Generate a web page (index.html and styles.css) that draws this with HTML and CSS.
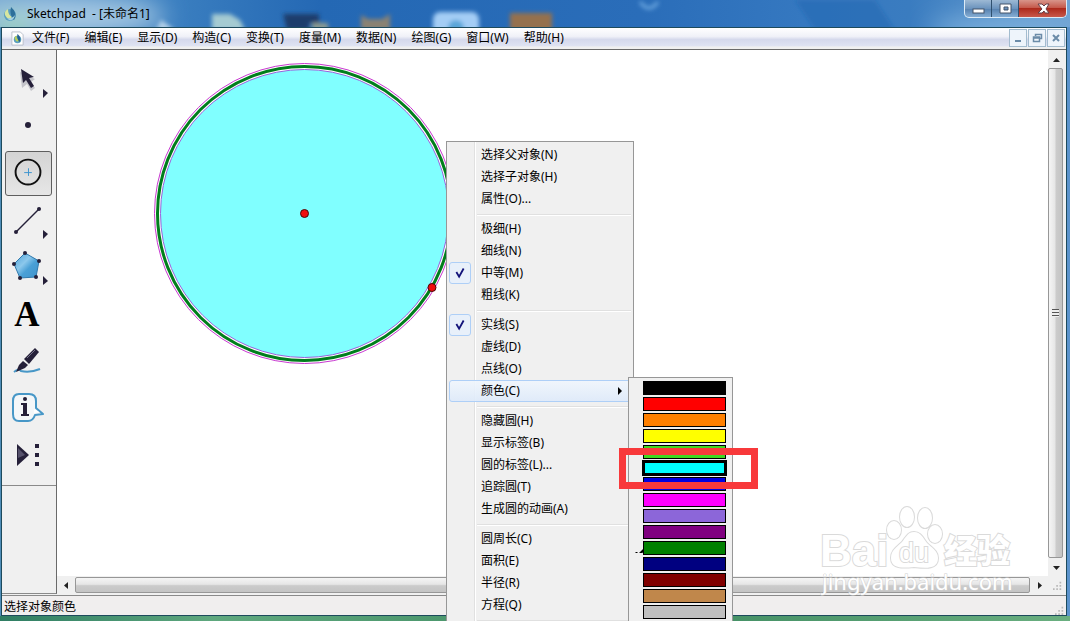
FILE: index.html
```html
<!DOCTYPE html>
<html lang="zh-CN">
<head>
  <meta charset="UTF-8" />
  <meta name="viewport" content="width=device-width, initial-scale=1.0"/>
  <title>Sketchpad - [未命名1]</title>
  <link rel="stylesheet" href="styles.css">
</head>
<body>
  <!-- Title bar -->
  <header class="titlebar">
    <svg class="title-bg" viewBox="0 0 1070 27" preserveAspectRatio="none" aria-hidden="true">
      <defs>
        <filter id="soft"><feGaussianBlur stdDeviation="2"/></filter>
        <filter id="glow" x="-50%" y="-100%" width="200%" height="300%"><feGaussianBlur stdDeviation="12"/></filter>
      </defs>
      <g filter="url(#glow)">
        <ellipse cx="70" cy="16" rx="95" ry="18" fill="#a9cbe4"/>
        <ellipse cx="14" cy="28" rx="20" ry="12" fill="#9fd6b8"/>
        <ellipse cx="1000" cy="30" rx="70" ry="12" fill="#7fb2de"/>
      </g>
      <g filter="url(#soft)">
        <path d="M156 30l5-10 14 10z" fill="#b3d0e8"/>
        <path d="M212 30V14h18l10 6 5 10z" fill="#a5cbd2"/>
        <path d="M283 14h36v9h-10v7h-22z" fill="#1c3c6c"/>
        <path d="M312 23h16v7h-16z" fill="#8f9c90"/>
        <path d="M361 30V15l7 4h14l8-5v16z" fill="#8a8272"/>
        <rect x="433" y="12" width="46" height="24" rx="7" fill="#a4cdf5"/>
        <circle cx="456" cy="28" r="8" fill="#5aa5d8"/>
        <rect x="510" y="13" width="42" height="20" fill="#95714e"/>
        <path d="M640 2q9 12 18 0" fill="none" stroke="#6aa6df" stroke-width="3"/>
        <path d="M795 0h80l20 30h-80z" fill="#1f62ac" opacity=".4"/>
      </g>
    </svg>
    <svg class="app-icon" viewBox="0 0 16 16" aria-hidden="true">
      <circle cx="7" cy="9" r="6" fill="#5c9fc0"/>
      <path d="M2 9q-1-4 3-6 0 6 4 8-4 4-7-2z" fill="#d7e6a0"/>
      <path d="M8 1q7 6 3 13-5-5-3-13z" fill="#2d6f9a"/>
      <path d="M4 12q5 1 8-3-1 6-6 5z" fill="#a8d3e2"/>
    </svg>
    <h1>Sketchpad&nbsp; - [未命名1]</h1>
    <div class="window-buttons">
      <button aria-label="最小化"><svg viewBox="0 0 16 16"><rect x="3" y="8" width="11" height="4" fill="#fff" stroke="#45546b"/></svg></button>
      <button aria-label="最大化"><svg viewBox="0 0 16 16"><path d="M3 3h11v9H3zM7 6v3h4V6z" fill="#fff" fill-rule="evenodd" stroke="#45546b"/></svg></button>
      <button class="close" aria-label="关闭"><svg viewBox="0 0 16 16"><path d="M3 3h4l2 2 2-2h3l-3 5 3 4h-4l-1-2-2 2H3l4-4z" fill="#fff" stroke="#664048"/></svg></button>
    </div>
  </header>

  <div class="window">
    <!-- Menu bar -->
    <nav class="menubar">
      <svg class="doc-icon" viewBox="0 0 16 16" aria-hidden="true">
        <path d="M2 1h9l3 3v11H2z" fill="#fff" stroke="#b9bec9"/>
        <circle cx="8" cy="9" r="4" fill="#5c9fc0"/>
        <path d="M5 8q0-3 2-3 0 4 3 5-3 3-5-2z" fill="#b9cf58"/>
        <path d="M8 3q5 5 2 9-3-4-2-9z" fill="#235f8e"/>
      </svg>
      <div class="menus">
        <button>文件(F)</button>
        <button>编辑(E)</button>
        <button>显示(D)</button>
        <button>构造(C)</button>
        <button>变换(T)</button>
        <button>度量(M)</button>
        <button>数据(N)</button>
        <button>绘图(G)</button>
        <button>窗口(W)</button>
        <button>帮助(H)</button>
      </div>
      <div class="doc-buttons">
        <button aria-label="最小化文档"><svg viewBox="0 0 16 16"><path d="M5 11h6" stroke="#6b8ba8" stroke-width="2"/></svg></button>
        <button aria-label="还原文档"><svg viewBox="0 0 16 16"><path d="M6.500 6V4.500h6v4H11M4 8h6M4.500 7v4.500h6V7z" fill="none" stroke="#6b8ba8" stroke-width="1.500"/></svg></button>
        <button aria-label="关闭文档"><svg viewBox="0 0 16 16"><path d="M5 5l6 6M11 5l-6 6" stroke="#6b8ba8" stroke-width="2"/></svg></button>
      </div>
    </nav>

    <main class="workspace">
      <!-- Toolbox -->
      <aside class="toolbox">
        <button aria-label="移动箭头工具"><svg viewBox="0 0 47 45">
          <path d="M15 15l2 16 5-4 4 7 4-3-4-6 4-3z" fill="#c4c4ca"/>
          <path d="M16 12l2 14 3-3 5 8 3-2-5-8 5-1z" fill="#252039"/>
          <path d="M38 32l5 4-5 5z" fill="#252039"/></svg></button>
        <button aria-label="点工具"><svg viewBox="0 0 47 45"><circle cx="23" cy="21" r="3" fill="#252039"/></svg></button>
        <button class="active" aria-label="圆工具"><svg viewBox="0 0 47 45">
          <circle cx="23" cy="21" r="13" fill="none" stroke="#111" stroke-width="2"/>
          <path d="M19 21.500h8M23.500 17v8" stroke="#3c93cf"/></svg></button>
        <button aria-label="线段直尺工具"><svg viewBox="0 0 47 45">
          <path d="M11 34l24-24" stroke="#252039" stroke-width="1.500"/>
          <circle cx="11" cy="34" r="2" fill="#252039"/><circle cx="34" cy="11" r="2" fill="#252039"/>
          <path d="M38 32l5 4-5 5z" fill="#252039"/></svg></button>
        <button aria-label="多边形工具"><svg viewBox="0 0 47 45">
          <defs><linearGradient id="poly" x2="1" y2="1"><stop offset="0" stop-color="#4a9fd6"/><stop offset=".4" stop-color="#8cc8ec"/><stop offset=".6" stop-color="#4aa0d6"/><stop offset="1" stop-color="#3f93cc"/></linearGradient></defs>
          <path d="M20 8l14 8-3 16-16 1-6-14z" fill="url(#poly)" stroke="#2e78ac"/>
          <g fill="#252039"><circle cx="20" cy="8" r="2"/><circle cx="34" cy="16" r="2"/><circle cx="31" cy="32" r="2"/><circle cx="15" cy="33" r="2"/><circle cx="9" cy="19" r="2"/></g>
          <path d="M38 31l5 5-5 4z" fill="#252039"/></svg></button>
        <button class="letter" aria-label="文本工具">A</button>
        <button aria-label="标记工具"><svg viewBox="0 0 47 45">
          <path d="M9 33q5-4 7-1 9 2 19-2" fill="none" stroke="#4797c7" stroke-width="2"/>
          <path d="M19 20L30 9l4 4-10 12z" fill="#252039"/><path d="M18 22l5 4-3 3-9 4 3-7z" fill="#252039"/>
          <path d="M22 19l8-8" stroke="#77738a"/></svg></button>
        <button aria-label="信息工具"><svg viewBox="0 0 47 45">
          <path d="M14 8h10q7 0 7 7v7l7 6-8 1q-2 6-7 6h-9q-6 0-6-7V15q0-7 6-7z" fill="#f4f7f9" stroke="#4797c7" stroke-width="2" stroke-linejoin="round"/>
          <path d="M29 23l5 3-5 1z" fill="#fff"/>
          <circle cx="20" cy="13" r="2" fill="#252039"/><path d="M16 17h6v11h2v2h-8v-2h2v-9h-2z" fill="#252039"/></svg></button>
        <button aria-label="自定义工具"><svg viewBox="0 0 47 45">
          <path d="M12 11l12 11-12 11z" fill="#252039"/><path d="M13 15l7 7-7 3z" fill="#55516b"/>
          <path d="M30 11h4v4h-4zM30 20h4v4h-4zM30 29h4v4h-4z" fill="#252039"/></svg></button>
      </aside>

      <!-- Drawing area -->
      <section class="canvas">
        <svg class="drawing" width="400" height="320" viewBox="57 50 400 320">
          <circle cx="304.500" cy="213.500" r="147" fill="#80ffff" stroke="#fff" stroke-width="6"/>
          <circle cx="304.500" cy="213.500" r="150" fill="none" stroke="#c838d0"/>
          <circle cx="304.500" cy="213.500" r="144" fill="none" stroke="#9a62dc"/>
          <circle cx="304.500" cy="213.500" r="147" fill="none" stroke="#007e1c" stroke-width="3"/>
          <circle cx="304.500" cy="213.500" r="4" fill="#f00d0d" stroke="#4b0808"/>
          <circle cx="432" cy="287.500" r="4" fill="#f00d0d" stroke="#4b0808"/>
        </svg>
      </section>

      <div class="scrollbar vertical">
        <button aria-label="向上滚动"><svg viewBox="0 0 9 9"><path d="M1 7h7L4.500 3z"/></svg></button>
        <div class="thumb"><span class="grip"></span></div>
        <button aria-label="向下滚动"><svg viewBox="0 0 9 9"><path d="M1 3h7L4.500 7z"/></svg></button>
      </div>
      <div class="scrollbar horizontal">
        <button aria-label="向左滚动"><svg viewBox="0 0 9 9"><path d="M6 1v7L2 4.500z"/></svg></button>
        <div class="thumb"></div>
        <button aria-label="向右滚动"><svg viewBox="0 0 9 9"><path d="M3 1v7l4-3.500z"/></svg></button>
      </div>
      <div class="corner"><svg class="size-grip" viewBox="0 0 11 11"><path d="M8 1h2v2H8zM4 5h2v2H4zM8 5h2v2H8zM0 9h2v2H0zM4 9h2v2H4zM8 9h2v2H8z"/></svg></div>
    </main>

    <footer class="statusbar">
      <span>选择对象颜色</span>
      <svg class="size-grip" viewBox="0 0 11 11"><path d="M8 1h2v2H8zM4 5h2v2H4zM8 5h2v2H8zM0 9h2v2H0zM4 9h2v2H4zM8 9h2v2H8z"/></svg>
    </footer>
  </div>

  <svg class="watermark" width="200" height="100" viewBox="815 500 200 100">
    <g class="logo">
      <text x="820" y="566" font-size="44">Bai</text>
      <text x="944" y="563" font-size="33" class="cjk">经验</text>
      <ellipse cx="894" cy="530" rx="7" ry="9"/>
      <ellipse cx="907" cy="517" rx="7" ry="10"/>
      <ellipse cx="925" cy="518" rx="7" ry="10"/>
      <ellipse cx="935" cy="534" rx="7" ry="9"/>
      <path d="M914 532c7 0 9 6 13 11 5 5 11 8 11 15 0 12-13 10-24 9-11 1-23 2-23-9 0-8 6-11 11-16 4-5 6-10 12-10z"/>
      <text x="899" y="562" font-size="27" class="du">du</text>
    </g>
    <text x="822" y="590" class="site">jingyan.baidu.com</text>
  </svg>

  <!-- Right-click menu -->
  <div class="context-menu" role="menu">
    <button role="menuitem">选择父对象(N)</button>
    <button role="menuitem">选择子对象(H)</button>
    <button role="menuitem">属性(O)...</button>
    <hr>
    <button role="menuitem">极细(H)</button>
    <button role="menuitem">细线(N)</button>
    <button role="menuitem" class="checked">中等(M)<svg viewBox="0 0 22 22"><path d="M7 10l3 5 5-9" /></svg></button>
    <button role="menuitem">粗线(K)</button>
    <hr>
    <button role="menuitem" class="checked">实线(S)<svg viewBox="0 0 22 22"><path d="M7 10l3 5 5-9" /></svg></button>
    <button role="menuitem">虚线(D)</button>
    <button role="menuitem">点线(O)</button>
    <button role="menuitem" class="open">颜色(C)</button>
    <hr>
    <button role="menuitem">隐藏圆(H)</button>
    <button role="menuitem">显示标签(B)</button>
    <button role="menuitem">圆的标签(L)...</button>
    <button role="menuitem">追踪圆(T)</button>
    <button role="menuitem">生成圆的动画(A)</button>
    <hr>
    <button role="menuitem">圆周长(C)</button>
    <button role="menuitem">面积(E)</button>
    <button role="menuitem">半径(R)</button>
    <button role="menuitem">方程(Q)</button>
    <hr>
  </div>

  <!-- Colour submenu -->
  <div class="color-menu" role="menu">
    <button class="black" aria-label="黑"></button>
    <button class="red" aria-label="红"></button>
    <button class="orange" aria-label="橙"></button>
    <button class="yellow" aria-label="黄"></button>
    <button class="lime" aria-label="浅绿"></button>
    <button class="cyan selected" aria-label="青"></button>
    <button class="blue" aria-label="蓝"></button>
    <button class="magenta" aria-label="品红"></button>
    <button class="violet" aria-label="淡紫"></button>
    <button class="purple" aria-label="紫"></button>
    <button class="green current" aria-label="绿"><svg viewBox="0 0 9 6"><path d="M0 4h2l1 1H1zM4 5l5-5v4L7 5z"/></svg></button>
    <button class="navy" aria-label="深蓝"></button>
    <button class="maroon" aria-label="深红"></button>
    <button class="brown" aria-label="棕"></button>
    <button class="silver" aria-label="灰"></button>
  </div>
  <div class="highlight"></div>
</body>
</html>
```
FILE: styles.css
```css
* {
  box-sizing: border-box;
}

body {
  margin: 0;
  height: 100vh;
  position: relative;
  display: flex;
  flex-direction: column;
  overflow: hidden;
  font-family: "Noto Sans", "Noto Sans CJK SC", sans-serif;
  font-size: 12px;
  line-height: 16px;
  color: #000;
  background: linear-gradient(90deg, #2f7d63, #5fa87e 20%, #3d8a60 60%, #6aaf80);
}

button {
  margin: 0;
  padding: 0;
  border: none;
  background: none;
  font: inherit;
  color: inherit;
}

svg {
  display: block;
}

/* Title bar */
.titlebar {
  position: relative;
  flex: none;
  display: flex;
  align-items: center;
  height: 27px;
  padding-left: 3px;
  background: linear-gradient(90deg, #6fa3cf, #3b7fc0 16%, #2468b4 30%, #2a6db9 60%, #3578c0 75%, #3a7cc0 85%, #6fa3d3);
}

.title-bg {
  position: absolute;
  inset: 0;
  width: 100%;
  height: 100%;
}

.app-icon {
  position: relative;
  width: 16px;
  height: 16px;
}

.titlebar h1 {
  position: relative;
  margin: 0 0 0 8px;
  font-size: 12px;
  font-weight: normal;
}

.window-buttons {
  position: relative;
  align-self: flex-start;
  display: flex;
  height: 18px;
  margin-left: auto;
  margin-right: 3px;
  border: 1px solid #dcebf7;
  border-top: none;
  border-radius: 0 0 5px 5px;
  overflow: hidden;
  background: linear-gradient(#9db9d4, #6b93bd 50%, #5580ae 51%, #85add4);
}

.window-buttons button {
  width: 27px;
  border-right: 1px solid #2f506f;
}

.window-buttons .close {
  width: 47px;
  border-right: none;
  background: linear-gradient(#d8958a, #c55a4c 45%, #ad2a1c 50%, #c8584a);
}

.window-buttons svg {
  width: 16px;
  height: 16px;
  margin: 0 auto;
}

/* Window body */
.window {
  flex: 1;
  min-height: 0;
  display: flex;
  flex-direction: column;
  margin: 0 3px 5px 1px;
  border: 1px solid #1d4a5c;
  background: #f0f0f0;
  box-shadow: 4px 0 0 #5b93cc, -1px 0 0 #4f8db8;
}

.menubar {
  flex: none;
  display: flex;
  align-items: center;
  height: 22px;
  padding: 0 1px 1px 8px;
  border-bottom: 1px solid #6a6a6a;
  background: linear-gradient(#fff, #f0f1f8 40%, #d5d9ec 55%, #dfe3f2 85%, #f0f0f0 90%);
}

.doc-icon {
  width: 15px;
  height: 15px;
}

.menus {
  display: flex;
  gap: 15px;
  margin-left: 7px;
}

.doc-buttons {
  display: flex;
  gap: 1px;
  margin-left: auto;
}

.doc-buttons button {
  width: 18px;
  height: 18px;
  border: 1px solid #a3bccf;
  background: #eef4fb;
}

.workspace {
  flex: 1;
  min-height: 0;
  display: grid;
  grid-template-columns: 55px 1fr 18px;
  grid-template-rows: 1fr 18px;
}

/* Toolbox */
.toolbox {
  grid-row: 1 / 3;
  display: flex;
  flex-direction: column;
  gap: 2px;
  padding: 7px 4px 0 3px;
  border-right: 1px solid #6a6a6a;
  border-bottom: 1px solid #8a8a8a;
}

.toolbox button {
  flex: none;
  width: 47px;
  height: 45px;
}

.toolbox .active {
  border: 1px solid #5e5e5e;
  border-radius: 3px;
  background: linear-gradient(#d4d4d4, #e6e6e6);
}

.toolbox .letter {
  font: bold 35px/45px "Liberation Serif", serif;
  padding-right: 3px;
}

.toolbox::after {
  content: "";
  height: 1px;
  margin: 5px -4px 0 -3px;
  background: #8a8a8a;
}

.canvas {
  min-width: 0;
  min-height: 0;
  overflow: hidden;
  background: #fff;
}

/* Scrollbars */
.scrollbar {
  display: flex;
  background: #f0f0f0;
}

.scrollbar button {
  flex: none;
  display: grid;
  place-items: center;
  width: 18px;
  height: 18px;
}

.scrollbar button svg {
  width: 9px;
  height: 9px;
  fill: #222;
}

.scrollbar .thumb {
  flex: 1;
  display: grid;
  place-items: center;
  border: 1px solid #979797;
  border-radius: 2px;
}

.vertical {
  flex-direction: column;
  padding-right: 2px;
}

.vertical button {
  width: 16px;
}

.vertical .thumb {
  width: 15px;
  background: linear-gradient(90deg, #f5f5f5, #e6e6e6 45%, #cbcbcb 55%, #c4c4c4);
}

.vertical .grip {
  width: 7px;
  height: 8px;
  background: repeating-linear-gradient(#555 0 1px, #eee 1px 3px);
}

.horizontal {
  padding: 1px 0;
}

.horizontal button {
  height: 16px;
}

.horizontal .thumb {
  background: linear-gradient(#f5f5f5, #e6e6e6 45%, #cbcbcb 55%, #c4c4c4);
}

.corner {
  display: grid;
  place-items: end;
  padding: 4px;
}

.size-grip {
  width: 9px;
  height: 9px;
  fill: #b8b8b8;
}

.statusbar {
  flex: none;
  display: flex;
  justify-content: space-between;
  align-items: center;
  height: 20px;
  margin-top: 1px;
  padding: 2px 2px 0;
  border-top: 1px solid #8a8a8a;
  background: #f0eeee;
}

.statusbar .size-grip {
  align-self: flex-end;
}

/* Watermark */
.watermark {
  position: absolute;
  right: 55px;
  bottom: 21px;
}

.logo {
  fill: #fff;
  stroke: #dadada;
  stroke-width: 2px;
  paint-order: stroke;
  font-family: "Liberation Sans", sans-serif;
  font-weight: bold;
}

.logo .cjk {
  font-family: "Noto Sans CJK SC", sans-serif;
  font-weight: 900;
}

.logo .du {
  font-weight: normal;
}

.site {
  fill: #fff;
  stroke: #d0d0d0;
  stroke-width: 1px;
  paint-order: stroke;
  font-family: "Noto Sans", sans-serif;
  font-size: 22px;
}

/* Right-click menu */
.context-menu {
  position: absolute;
  left: 446px;
  top: 141px;
  width: 188px;
  padding: 2px;
  border: 1px solid #979797;
  background: linear-gradient(90deg, transparent 27px, #e0e0e0 27px 28px, #fff 28px 29px, transparent 29px) #f0f0f0;
}

.context-menu button {
  position: relative;
  display: block;
  width: 100%;
  height: 22px;
  padding-left: 32px;
  text-align: left;
}

.context-menu hr {
  height: 2px;
  margin: 4px 0 2px 28px;
  border: none;
  border-top: 1px solid #e0e0e0;
  border-bottom: 1px solid #fff;
}

.context-menu .checked svg {
  position: absolute;
  left: 0;
  top: 0;
  width: 22px;
  height: 22px;
  border: 1px solid #aecff7;
  border-radius: 3px;
  background: #e8f0fa;
  fill: none;
  stroke: #14147a;
  stroke-width: 2px;
}

.context-menu .open {
  border: 1px solid #aecff7;
  border-radius: 3px;
  padding-left: 31px;
  background: linear-gradient(rgba(240, 246, 253, 0.9), rgba(222, 234, 250, 0.9));
}

.context-menu .open::after {
  content: "";
  position: absolute;
  right: 8px;
  top: 6px;
  border: 4px solid transparent;
  border-left-color: #000;
  border-right: none;
}

/* Colour submenu */
.color-menu {
  position: absolute;
  left: 628px;
  top: 377px;
  width: 105px;
  display: flex;
  flex-direction: column;
  gap: 2px;
  padding: 3px 6px 3px 14px;
  border: 1px solid #979797;
  background: #f0f0f0;
}

.color-menu button {
  position: relative;
  height: 14px;
  border: 1px solid #000;
}

.color-menu .selected {
  outline: 1px solid #000;
  border-width: 2px;
}

/* Tick mark of the colour in use, partly hidden by its swatch */
.color-menu .current svg {
  position: absolute;
  right: 100%;
  bottom: 0;
  width: 9px;
  height: 6px;
}

.black { background: #000; }
.red { background: #f00; }
.orange { background: #ff8000; }
.yellow { background: #ff0; }
.lime { background: #40d820; }
.cyan { background: #0ff; }
.blue { background: #0000e0; }
.magenta { background: #f0f; }
.violet { background: #8c66d9; }
.purple { background: #800080; }
.green { background: #008000; }
.navy { background: #000080; }
.maroon { background: #800000; }
.brown { background: #c0874b; }
.silver { background: #c0c0c0; }

.highlight {
  position: absolute;
  left: 619px;
  top: 448px;
  width: 139px;
  height: 41px;
  border: 7px solid #f8393b;
}
```
